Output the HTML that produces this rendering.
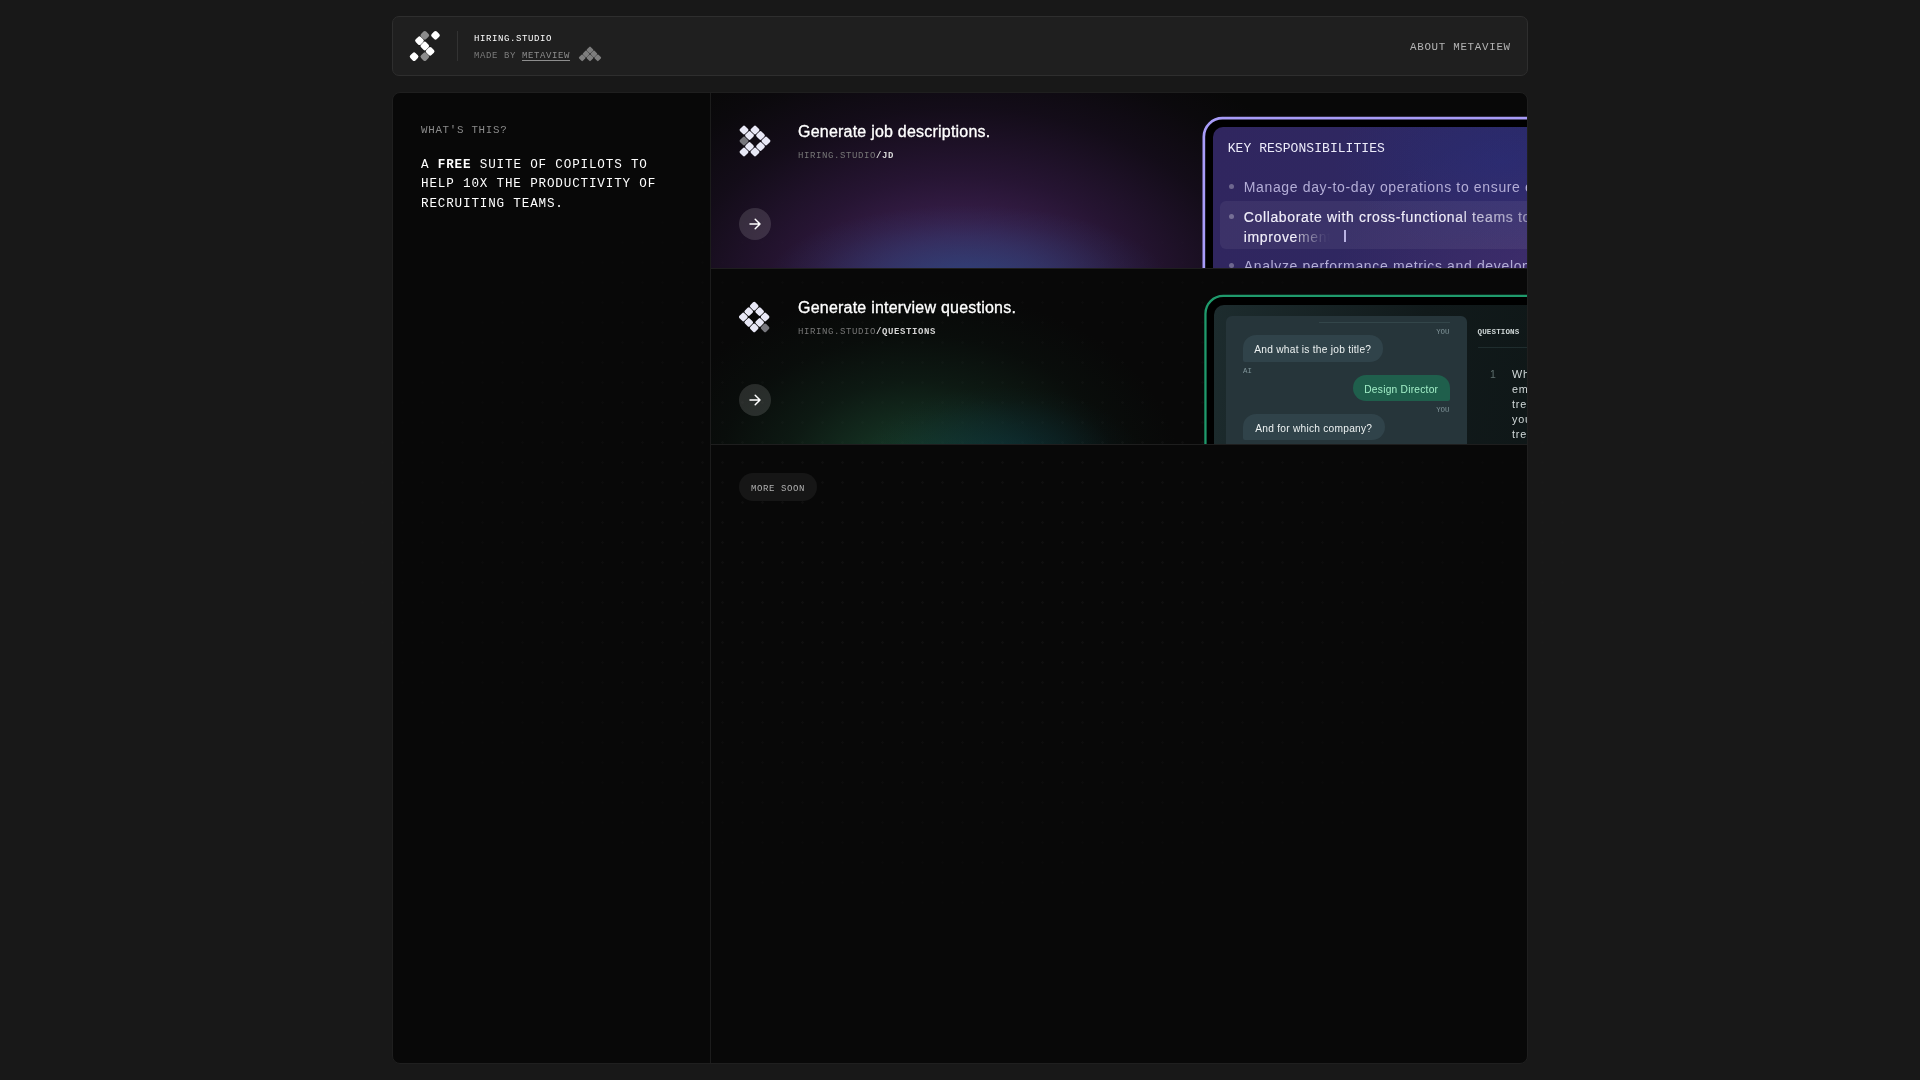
<!DOCTYPE html>
<html lang="en">
<head>
<meta charset="utf-8">
<title>Hiring.Studio</title>
<style>
*{box-sizing:border-box;margin:0;padding:0}
html,body{width:1920px;height:1080px;overflow:hidden;background:#181818;color:#fff}
body{position:relative;font-family:"Liberation Mono",monospace;-webkit-font-smoothing:antialiased}
.mono{font-family:"Liberation Mono",monospace;text-transform:uppercase;white-space:nowrap}
.sans{font-family:"Liberation Sans",sans-serif;white-space:nowrap}
.abs{position:absolute}
#header{will-change:transform;position:absolute;left:392px;top:16px;width:1136px;height:60px;background:#1f1f1f;border:1px solid #2e2e2e;border-radius:7px}
#main{will-change:transform;position:absolute;left:392px;top:92px;width:1136px;height:972px;background:#080808;border:1px solid #1f1f1f;border-radius:8px;overflow:hidden}
#side{position:absolute;left:0;top:0;width:318px;height:970px;border-right:1px solid #1c1c1c}
#content{position:absolute;left:318px;top:0;width:816px;height:970px}
.card{position:absolute;left:0;width:816px;height:176px;border-bottom:1px solid #1e1e1e;overflow:hidden}
.ttl{font-size:16px;line-height:20px;color:#fff;letter-spacing:.22px;-webkit-text-stroke:.32px #fff}
.sub{font-size:9px;letter-spacing:.6px;line-height:12px;color:#777}
.sub b{color:#d4d4d4}
.glow{position:absolute;left:0;top:0;width:816px;height:175px}
#g1{background:radial-gradient(ellipse 200px 76px at 256px 188px,rgba(38,78,134,.7) 0%,rgba(38,76,130,.42) 42%,rgba(38,76,130,.12) 78%,rgba(38,76,130,0) 100%),radial-gradient(ellipse 405px 272px at 250px 205px,rgba(88,48,118,.8) 0%,rgba(80,42,108,.72) 22%,rgba(66,32,90,.52) 45%,rgba(50,24,70,.27) 70%,rgba(42,20,58,.09) 88%,rgba(40,18,56,0) 100%)}
#g2{background:radial-gradient(ellipse 140px 75px at 292px 192px,rgba(12,56,72,.58) 0%,rgba(12,56,72,.28) 50%,rgba(12,56,72,.06) 82%,rgba(12,56,72,0) 100%),radial-gradient(ellipse 265px 185px at 205px 205px,rgba(28,76,50,.8) 0%,rgba(26,68,46,.62) 25%,rgba(22,56,38,.36) 50%,rgba(18,48,32,.13) 75%,rgba(18,48,32,0) 100%)}
.win{position:absolute;left:0;top:0;width:816px;height:175px}
.frame{position:absolute;left:0;top:0}
.pan{position:absolute;width:420px;height:300px;border-radius:10px;overflow:hidden}
#p1{left:502px;top:34px;background:radial-gradient(ellipse 170px 90px at 290px 35px,rgba(38,46,124,.5) 0%,rgba(38,46,124,0) 100%),radial-gradient(ellipse 250px 150px at 370px 150px,rgba(92,52,120,.42) 0%,rgba(92,52,120,0) 100%),linear-gradient(90deg,#30265f 0%,#2e2862 60%,#2c2966 100%)}
.bl{position:absolute;left:17px;width:5.2px;height:5.2px;border-radius:50%;background:rgba(255,255,255,.3)}
.li{left:31.5px;font-size:14px;line-height:19.6px;letter-spacing:.65px}
.fade{background:linear-gradient(90deg,rgba(255,255,255,.7) 0%,rgba(255,255,255,.4) 40%,rgba(255,255,255,.12) 70%,rgba(255,255,255,0) 95%);-webkit-background-clip:text;background-clip:text;color:transparent}
#p2{left:503px;top:36px;background:linear-gradient(100deg,#1d2c2e 0%,#111a1b 45%,#0d1414 100%)}
#chat{left:12px;top:11.1px;width:241px;height:200px;border-radius:6px;background:#26353a;overflow:hidden}
.lb{font-size:7.4px;line-height:9px;letter-spacing:0;color:#80959a}
.bub{height:26.8px;background:#30434a;color:#edf2f2;font-size:10.2px;line-height:23.6px;padding-top:3.2px;text-align:center;letter-spacing:.25px}
.dots{position:absolute;left:0;top:0;width:1920px;height:1080px;pointer-events:none;
background-image:radial-gradient(circle at 1.5px 1.5px,rgba(255,255,255,.032) 1px,transparent 1.6px);background-size:20px 20px;background-position:1px 1px;
-webkit-mask-image:radial-gradient(ellipse 700px 420px at 960px 540px,#000 30%,transparent 100%);mask-image:radial-gradient(ellipse 700px 420px at 960px 540px,#000 30%,transparent 100%)}
</style>
</head>
<body>
<div class="dots"></div>
<div id="header">
  <svg class="abs" style="left:16px;top:13px" width="32" height="32" viewBox="0 0 32 32"><rect x="12.20" y="1.70" width="7.2" height="7.2" rx="1.9" fill="#8c8c8c" transform="rotate(45 15.80 5.30)"/><rect x="22.90" y="1.70" width="7.2" height="7.2" rx="1.9" fill="#fff" transform="rotate(45 26.50 5.30)"/><rect x="6.85" y="7.05" width="7.2" height="7.2" rx="1.9" fill="#fff" transform="rotate(45 10.45 10.65)"/><rect x="12.20" y="12.40" width="7.2" height="7.2" rx="1.9" fill="#fff" transform="rotate(45 15.80 16.00)"/><rect x="17.55" y="17.75" width="7.2" height="7.2" rx="1.9" fill="#fff" transform="rotate(45 21.15 21.35)"/><rect x="12.20" y="23.10" width="7.2" height="7.2" rx="1.9" fill="#8c8c8c" transform="rotate(45 15.80 26.70)"/><rect x="1.50" y="23.10" width="7.2" height="7.2" rx="1.9" fill="#fff" transform="rotate(45 5.10 26.70)"/></svg>
  <div class="abs" style="left:64px;top:14px;width:1px;height:30px;background:#333"></div>
  <div class="abs mono" id="t_hs" style="left:81px;top:16px;font-size:9px;letter-spacing:.6px;line-height:12px;color:#fff">Hiring.Studio</div>
  <div class="abs mono" id="t_mb" style="left:81px;top:33px;font-size:9px;letter-spacing:.6px;line-height:12px;color:#7c7c7c">Made by <span style="color:#8e8e8e;text-decoration:underline;text-underline-offset:1.5px">Metaview</span></div>
  <svg class="abs" style="left:184.5px;top:29px" width="24" height="16" viewBox="0 0 24 16"><rect x="9.35" y="1.35" width="5.3" height="5.3" rx="1" fill="#7d7d7d" transform="rotate(45 12.00 4.00)"/><rect x="5.45" y="5.25" width="5.3" height="5.3" rx="1" fill="#7d7d7d" transform="rotate(45 8.10 7.90)"/><rect x="13.25" y="5.25" width="5.3" height="5.3" rx="1" fill="#7d7d7d" transform="rotate(45 15.90 7.90)"/><rect x="1.55" y="9.15" width="5.3" height="5.3" rx="1" fill="#7d7d7d" transform="rotate(45 4.20 11.80)"/><rect x="9.35" y="9.15" width="5.3" height="5.3" rx="1" fill="#7d7d7d" transform="rotate(45 12.00 11.80)"/><rect x="17.15" y="9.15" width="5.3" height="5.3" rx="1" fill="#7d7d7d" transform="rotate(45 19.80 11.80)"/></svg>
  <div class="abs mono" id="t_am" style="left:1017px;top:23px;font-size:10.8px;letter-spacing:.72px;line-height:14px;color:#b4b4b4">About Metaview</div>
</div>
<div id="main">
  <div class="dots" style="left:-393px;top:-93px"></div>
  <div id="side">
    <div class="abs mono" id="t_wt" style="left:28px;top:30px;font-size:10.8px;letter-spacing:.72px;line-height:14px;color:#8c8c8c">What's this?</div>
    <div class="abs mono" id="t_st" style="left:28px;top:63px;font-size:12.6px;letter-spacing:.84px;line-height:19.35px;color:#fff;white-space:pre">A <b>free</b> suite of copilots to
help 10x the productivity of
recruiting teams.</div>
  </div>
  <div id="content">
    <div class="card" id="c1" style="top:0">
      <div class="glow" id="g1"></div>
      <svg class="abs" style="left:28px;top:32px" width="32" height="32" viewBox="0 0 32 32"><rect x="1.45" y="1.45" width="7.1" height="7.1" rx="1.7" fill="#e8e8f6" transform="rotate(45 5.00 5.00)"/><rect x="12.45" y="1.45" width="7.1" height="7.1" rx="1.7" fill="#e8e8f6" transform="rotate(45 16.00 5.00)"/><rect x="6.95" y="6.95" width="7.1" height="7.1" rx="1.7" fill="#e8e8f6" transform="rotate(45 10.50 10.50)"/><rect x="17.95" y="6.95" width="7.1" height="7.1" rx="1.7" fill="#e8e8f6" transform="rotate(45 21.50 10.50)"/><rect x="1.45" y="12.45" width="7.1" height="7.1" rx="1.7" fill="#77777d" transform="rotate(45 5.00 16.00)"/><rect x="23.45" y="12.45" width="7.1" height="7.1" rx="1.7" fill="#e8e8f6" transform="rotate(45 27.00 16.00)"/><rect x="6.95" y="17.95" width="7.1" height="7.1" rx="1.7" fill="#e8e8f6" transform="rotate(45 10.50 21.50)"/><rect x="17.95" y="17.95" width="7.1" height="7.1" rx="1.7" fill="#e8e8f6" transform="rotate(45 21.50 21.50)"/><rect x="1.45" y="23.45" width="7.1" height="7.1" rx="1.7" fill="#e8e8f6" transform="rotate(45 5.00 27.00)"/><rect x="12.45" y="23.45" width="7.1" height="7.1" rx="1.7" fill="#e8e8f6" transform="rotate(45 16.00 27.00)"/></svg>
      <div class="abs sans ttl" id="t_t1" style="left:87px;top:29px">Generate job descriptions.</div>
      <div class="abs mono sub" id="t_s1" style="left:87px;top:57px">Hiring.Studio<b>/JD</b></div>
      <svg class="abs" style="left:28px;top:115px" width="32" height="32" viewBox="0 0 32 32"><circle cx="16" cy="16" r="16" fill="rgba(255,255,255,.13)"/><path d="M11 16H21M16.2 11.2L21 16L16.2 20.8" fill="none" stroke="#fff" stroke-width="1.5" stroke-linecap="round" stroke-linejoin="round"/></svg>
      <div class="win" id="w1">
        <svg class="frame" width="816" height="175" viewBox="0 0 816 175"><rect x="492.85" y="25.15" width="400" height="300" rx="18.6" fill="#000" stroke="#a89cf8" stroke-width="2.7"/></svg>
        <div class="pan" id="p1"><div class="abs" style="left:-.8px;top:-.9px;width:420px;height:300px">
          <div class="abs mono" id="t_kr" style="left:15.5px;top:15px;font-size:13px;letter-spacing:.06px;line-height:16px;color:#ecebfa">Key responsibilities</div>
          <div class="abs" style="left:8px;top:74.5px;width:400px;height:48.5px;border-radius:6px;background:rgba(255,255,255,.06)"></div>
          <i class="bl" style="top:58.2px"></i><i class="bl" style="top:87.9px"></i><i class="bl" style="top:136.5px"></i>
          <div class="abs sans li" id="t_l1" style="top:51.7px;color:#b3add6">Manage day-to-day operations to ensure efficiency</div>
          <div class="abs sans li" id="t_l2" style="top:82px;color:#f1effa;-webkit-text-stroke:.15px #f1effa;-webkit-mask-image:linear-gradient(90deg,#000 0,#000 200px,rgba(0,0,0,.72) 240px,rgba(0,0,0,.5) 284px);mask-image:linear-gradient(90deg,#000 0,#000 200px,rgba(0,0,0,.72) 240px,rgba(0,0,0,.5) 284px)">Collaborate with cross-functional teams to drive</div>
          <div class="abs sans li" id="t_l3" style="top:101.6px;color:#fff"><span style="-webkit-text-stroke:.15px #f1effa;color:#f1effa">improve</span><span class="fade">ment</span></div>
          <div class="abs" style="left:132px;top:104.2px;width:2.2px;height:11.6px;background:#b9b2e2"></div>
          <div class="abs sans li" id="t_l4" style="top:131px;color:#b3add6">Analyze performance metrics and develop strategies</div>
        </div></div>
      </div>
    </div>
    <div class="card" id="c2" style="top:176px">
      <div class="glow" id="g2"></div>
      <svg class="abs" style="left:28px;top:32px" width="32" height="32" viewBox="0 0 32 32"><rect x="11.70" y="1.60" width="7.0" height="7.0" rx="1.6" fill="#e8e8f6" transform="rotate(45 15.20 5.10)"/><rect x="6.25" y="7.05" width="7.0" height="7.0" rx="1.6" fill="#e8e8f6" transform="rotate(45 9.75 10.55)"/><rect x="17.15" y="7.05" width="7.0" height="7.0" rx="1.6" fill="#e8e8f6" transform="rotate(45 20.65 10.55)"/><rect x="0.80" y="12.50" width="7.0" height="7.0" rx="1.6" fill="#e8e8f6" transform="rotate(45 4.30 16.00)"/><rect x="22.60" y="12.50" width="7.0" height="7.0" rx="1.6" fill="#e8e8f6" transform="rotate(45 26.10 16.00)"/><rect x="6.25" y="17.95" width="7.0" height="7.0" rx="1.6" fill="#e8e8f6" transform="rotate(45 9.75 21.45)"/><rect x="17.15" y="17.95" width="7.0" height="7.0" rx="1.6" fill="#e8e8f6" transform="rotate(45 20.65 21.45)"/><rect x="11.70" y="23.40" width="7.0" height="7.0" rx="1.6" fill="#e8e8f6" transform="rotate(45 15.20 26.90)"/><rect x="22.60" y="23.40" width="7.0" height="7.0" rx="1.6" fill="#77777d" transform="rotate(45 26.10 26.90)"/></svg>
      <div class="abs sans ttl" id="t_t2" style="left:87px;top:29px">Generate interview questions.</div>
      <div class="abs mono sub" id="t_s2" style="left:87px;top:57px">Hiring.Studio<b>/Questions</b></div>
      <svg class="abs" style="left:28px;top:115px" width="32" height="32" viewBox="0 0 32 32"><circle cx="16" cy="16" r="16" fill="rgba(255,255,255,.13)"/><path d="M11 16H21M16.2 11.2L21 16L16.2 20.8" fill="none" stroke="#fff" stroke-width="1.5" stroke-linecap="round" stroke-linejoin="round"/></svg>
      <div class="win" id="w2">
        <svg class="frame" width="816" height="175" viewBox="0 0 816 175"><rect x="494.45" y="26.95" width="400" height="300" rx="17.8" fill="#000" stroke="#1f9a6c" stroke-width="2.3"/></svg>
        <div class="pan" id="p2">
          <div class="abs" id="chat">
            <div class="abs" style="left:93px;top:5.5px;width:131px;height:1px;background:#33464a"></div>
            <div class="abs mono lb" style="right:17.5px;top:11.8px">You</div>
            <div class="abs sans bub" id="b1" style="left:17px;top:19px;width:139.5px;border-radius:13px 13px 13px 2px"><span id="t_b1">And what is the job title?</span></div>
            <div class="abs mono lb" style="left:17px;top:51px">AI</div>
            <div class="abs sans bub" id="b2" style="left:127px;top:58.5px;width:96.5px;border-radius:13px 13px 2px 13px;background:#1f5f4c;color:#a2efc8"><span id="t_b2">Design Director</span></div>
            <div class="abs mono lb" style="right:17.5px;top:89.8px">You</div>
            <div class="abs sans bub" id="b3" style="left:17px;top:97.5px;width:141.5px;border-radius:13px 13px 13px 2px"><span id="t_b3">And for which company?</span></div>
          </div>
          <div class="abs mono" id="t_qs" style="left:263.5px;top:22px;font-size:7.6px;font-weight:bold;letter-spacing:.1px;line-height:10px;color:#cdd5d5">Questions</div>
          <div class="abs" style="left:264px;top:42px;width:80px;height:1px;background:#1f2d2e"></div>
          <div class="abs sans" id="t_n1" style="left:276px;top:62.4px;font-size:10.5px;line-height:14.9px;color:#5f6e6e">1</div>
          <div class="abs sans" id="t_q1" style="left:298px;top:62.4px;font-size:10.8px;line-height:14.9px;letter-spacing:.8px;color:#d3dada;white-space:pre">What
employee
trends
you
trends</div>
        </div>
      </div>
    </div>
    <div class="abs" id="pill" style="left:28px;top:380px;width:78px;height:28px;border-radius:14px;background:#161616"><div class="abs mono" id="t_ms" style="left:12px;top:10px;font-size:9px;letter-spacing:.6px;line-height:12px;color:#b0b0b0">More soon</div></div>
  </div>
</div>
</body>
</html>
